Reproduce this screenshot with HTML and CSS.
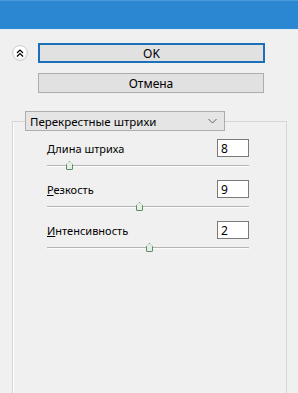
FILE: index.html
```html
<!DOCTYPE html>
<html lang="ru">
<head>
    <meta charset="UTF-8">
    <meta name="viewport" content="width=device-width, initial-scale=1.0">
    <title>Перекрестные штрихи</title>
    <link rel="stylesheet" href="styles.css">
</head>
<body>
    <div class="titlebar"></div>
    <div class="buttons">
        <div class="button-row">
            <button class="collapse" aria-label="Свернуть">
                <svg width="8" height="8" viewBox="0 0 8 8">
                    <path d="M1 4 L4 1 L7 4 M1 7.5 L4 4.5 L7 7.5" fill="none" stroke="#000" stroke-width="1.2"/>
                </svg>
            </button>
            <button class="button default">OK</button>
        </div>
        <div class="button-row">
            <button class="button">Отмена</button>
        </div>
    </div>
    <fieldset class="group">
        <legend class="dropdown">
            <span>Перекрестные штрихи</span>
            <svg width="9" height="6" viewBox="0 0 9 6">
                <path d="M0.5 1 L4.5 5 L8.5 1" fill="none" stroke="#606060" stroke-width="1"/>
            </svg>
        </legend>
        <div class="param">
            <div class="param-head">
                <label for="length"><u>Д</u>лина штриха</label>
                <input type="text" id="length" class="field" value="8">
            </div>
            <div class="slider"><span class="thumb" style="left: 22px"></span></div>
        </div>
        <div class="param">
            <div class="param-head">
                <label for="sharpness"><u>Р</u>езкость</label>
                <input type="text" id="sharpness" class="field" value="9">
            </div>
            <div class="slider"><span class="thumb" style="left: 92px"></span></div>
        </div>
        <div class="param">
            <div class="param-head">
                <label for="intensity"><u>И</u>нтенсивность</label>
                <input type="text" id="intensity" class="field" value="2">
            </div>
            <div class="slider"><span class="thumb" style="left: 102px"></span></div>
        </div>
    </fieldset>
</body>
</html>
```

FILE: styles.css
```css
html, body {
    height: 100%;
}
body {
    margin: 0;
    background-color: #f0f0f0;
    font-family: "Noto Sans", "Liberation Sans", sans-serif;
    font-size: 11px;
    color: #000;
    overflow: hidden;
    display: flex;
    flex-direction: column;
}
.titlebar {
    flex: none;
    height: 30px;
    box-sizing: border-box;
    background-color: #2b87d1;
    border-top: 1px solid #4b9ad9;
    border-bottom: 1px solid #e3eef9;
}
.buttons {
    flex: none;
    padding: 13px 0 0 12px;
}
.button-row {
    display: flex;
    align-items: center;
    margin-bottom: 10px;
}
.button-row:last-child {
    margin-left: 26px;
    margin-bottom: 0;
}
.collapse {
    width: 16px;
    height: 16px;
    margin: 0 10px 0 0;
    padding: 0;
    border: 1px solid #cfcfcf;
    border-radius: 50%;
    background: radial-gradient(circle at 50% 40%, #ffffff 40%, #e6e6e6 100%);
    display: flex;
    align-items: center;
    justify-content: center;
}
.button {
    width: 226px;
    height: 20px;
    padding: 0;
    border: 1px solid #adadad;
    background-color: #e1e1e1;
    font-family: inherit;
    font-size: 12px;
    color: #000;
}
.button.default {
    width: 227px;
    border: 2px solid #1c6fb9;
}
.group {
    flex: 1;
    min-height: 0;
    margin: 18px 0 0 12px;
    padding: 0 0 0 12px;
    width: 275px;
    box-sizing: border-box;
    border: 1px solid #d5d5d5;
    border-bottom: none;
    box-shadow: inset 1px 0 #ffffff;
}
.dropdown {
    width: 200px;
    height: 20px;
    box-sizing: border-box;
    padding: 0 7px 0 4px;
    border: 1px solid #adadad;
    background-color: #e5e5e5;
    display: flex;
    align-items: center;
    justify-content: space-between;
    font-size: 11.5px;
}
.param {
    width: 202px;
    margin-left: 22px;
}
.param:first-of-type {
    margin-top: 8px;
}
.param-head {
    display: flex;
    align-items: center;
    justify-content: space-between;
}
.field {
    width: 32px;
    height: 18px;
    box-sizing: border-box;
    margin: 0;
    padding: 0 3px;
    border: 1px solid #7a7a7a;
    background-color: #fff;
    font-family: inherit;
    font-size: 12px;
}
.slider {
    position: relative;
    height: 10px;
    margin: 4px 0 9px;
}
.slider::before {
    content: "";
    position: absolute;
    left: 0;
    right: 0;
    top: 4px;
    height: 1px;
    background-color: #b4b4b4;
    border-bottom: 1px solid #fdfdfd;
}
.thumb {
    position: absolute;
    top: 0;
    width: 7px;
    height: 9px;
    margin-left: -3px;
    box-sizing: border-box;
    border: 1px solid #5f8a6b;
    border-radius: 3px 3px 1px 1px;
    background-color: #e4efe4;
    clip-path: polygon(50% 0, 100% 40%, 100% 100%, 0 100%, 0 40%);
}
```
